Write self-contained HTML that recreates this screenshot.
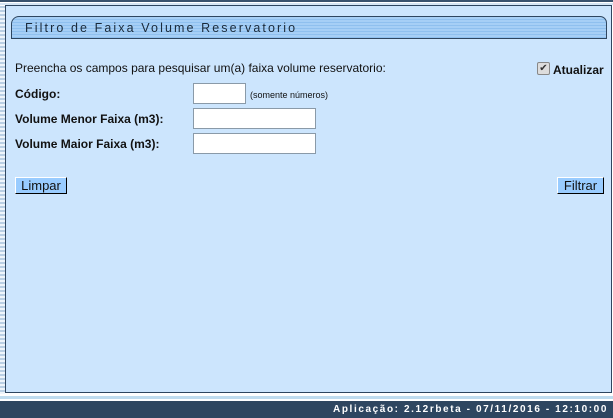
<html><head><style>
body{margin:0;width:613px;height:418px;overflow:hidden;background:#fff;font-family:"Liberation Sans",sans-serif;position:relative}
.top{position:absolute;left:0;top:0;width:613px;height:2px;background:#3a536e}
.top2{position:absolute;left:0;top:3px;width:613px;height:2px;background:#d6e6f5}
.stripe{position:absolute;left:0;top:6px;width:5px;height:388px;background:repeating-linear-gradient(#b9cfe4 0 2px,#eef5fb 2px 4px)}
.panel{position:absolute;left:5px;top:5px;width:605px;height:386px;background:#cce5fd;border:1px solid #2e4660}
.title{position:absolute;left:5px;top:10px;width:596px;height:23px;border:1px solid #2e4660;border-radius:8px 7px 0 0;background:repeating-linear-gradient(#a6cff6 0 2px,#8fc0ef 2px 3px);font-size:12.5px;letter-spacing:2.1px;color:#1a2a3a;line-height:23px;padding-left:13px;box-sizing:border-box}
.t{position:absolute;font-size:12px;color:#111}
.b{font-weight:bold}
input.f{position:absolute;height:21px;border:1px solid #8a9aa8;background:#fff;box-sizing:border-box;padding:0}
.btn{position:absolute;height:17px;background:#99ccff;border:1px solid #000;border-top-color:#fff;border-left-color:#fff;font-size:13px;line-height:16px;text-align:center;box-sizing:border-box;color:#111}
.bot1{position:absolute;left:0;top:394px;width:613px;height:3px;background:#fff}
.bot2{position:absolute;left:0;top:396px;width:613px;height:3px;background:#bfdcef}
.foot{position:absolute;left:0;top:401px;width:613px;height:17px;background:#2e4660;color:#fff;font-size:10px;font-weight:bold;letter-spacing:1.6px;text-align:right;line-height:17px;padding-right:5px;box-sizing:border-box}
.chk{position:absolute;left:537px;top:62px;width:11px;height:11px;background:#ddd;border:1px solid #888;border-radius:2px;font-size:10px;line-height:11px;text-align:center;color:#333}
</style></head><body>
<div class="top"></div><div class="top2"></div>
<div class="stripe"></div>
<div class="panel"><div class="title">Filtro de Faixa Volume Reservatorio</div></div>
<div class="t" style="left:15px;top:61px">Preencha os campos para pesquisar um(a) faixa volume reservatorio:</div>
<div class="chk">✔</div>
<div class="t b" style="left:553px;top:63px">Atualizar</div>
<div class="t b" style="left:15px;top:87px">Código:</div>
<input class="f" style="left:193px;top:83px;width:53px">
<div class="t" style="left:250px;top:90px;font-size:9px">(somente números)</div>
<div class="t b" style="left:15px;top:112px">Volume Menor Faixa (m3):</div>
<input class="f" style="left:193px;top:108px;width:123px">
<div class="t b" style="left:15px;top:137px">Volume Maior Faixa (m3):</div>
<input class="f" style="left:193px;top:133px;width:123px">
<div class="btn" style="left:15px;top:177px;width:52px">Limpar</div>
<div class="btn" style="left:557px;top:177px;width:47px">Filtrar</div>
<div class="bot1"></div><div class="bot2"></div>
<div class="foot">Aplicação: 2.12rbeta - 07/11/2016 - 12:10:00</div>
</body></html>
